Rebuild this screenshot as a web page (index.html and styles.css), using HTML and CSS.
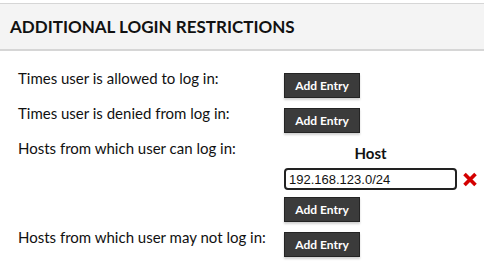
FILE: index.html
```html
<!DOCTYPE html>
<html lang="en">
<head>
    <meta charset="UTF-8"/>
    <title>Additional Login Restrictions</title>
    <link rel="stylesheet" href="styles.css">
</head>
<body>

<div class="panel">
    <div class="panel-head">
        <h2>ADDITIONAL LOGIN RESTRICTIONS</h2>
    </div>

    <div class="restrictions">
        <div class="row">
            <label>Times user is allowed to log in:</label>
            <div class="value">
                <button class="btn">Add Entry</button>
            </div>
        </div>
        <div class="row">
            <label>Times user is denied from log in:</label>
            <div class="value">
                <button class="btn">Add Entry</button>
            </div>
        </div>
        <div class="row hosts">
            <label>Hosts from which user can log in:</label>
            <div class="value">
                <div class="col-head">Host</div>
                <div class="entry">
                    <input type="text" name="allow_host" value="192.168.123.0/24"/>
                    <svg class="remove" width="16" height="15" viewBox="0 0 16 15">
                        <path d="M2.5 2 L13.5 13 M13.5 2 L2.5 13" stroke="#d40000" stroke-width="3.6" stroke-linecap="butt"/>
                    </svg>
                </div>
                <button class="btn">Add Entry</button>
            </div>
        </div>
        <div class="row">
            <label>Hosts from which user may not log in:</label>
            <div class="value">
                <button class="btn">Add Entry</button>
            </div>
        </div>
    </div>
</div>

</body>
</html>
```

FILE: styles.css
```css
body {
  margin: 0;
  font-family: Lato, 'Noto Sans', sans-serif;
  background: #ffffff;
  color: #111111;
}

.panel {
  padding-top: 3px;
}

.panel-head {
  background: #f4f4f4;
  border-top: 1px solid #d6d6d6;
  border-bottom: 2px solid #d6d6d6;
  height: 45px;
  display: flex;
  align-items: center;
  padding: 0 10px;
}

.panel-head h2 {
  margin: 0;
  font-size: 17px;
  font-weight: 700;
  color: #111111;
}

.restrictions {
  padding: 22px 0 0 18px;
}

.row {
  display: flex;
  align-items: flex-start;
  margin-bottom: 10px;
}

.row label {
  width: 266px;
  font-size: 15px;
  line-height: 19px;
  margin-top: -4px;
}

.value {
  display: flex;
  flex-direction: column;
  align-items: flex-start;
}

.col-head {
  width: 173px;
  text-align: center;
  font-weight: 700;
  font-size: 15px;
  line-height: 20px;
  margin-bottom: 5px;
}

.entry {
  display: flex;
  align-items: center;
  gap: 5px;
  margin-bottom: 7px;
}

.entry input {
  width: 173px;
  height: 22px;
  box-sizing: border-box;
  border: 2px solid #222222;
  border-radius: 4px;
  padding: 0 3px;
  font-family: 'Liberation Sans', Arial, sans-serif;
  font-size: 13px;
  color: #111111;
  outline: none;
}

.btn {
  width: 76px;
  height: 25px;
  background: #3b3b3b;
  border: 1px solid #242424;
  box-shadow: 0 2px 2px rgba(0, 0, 0, 0.18);
  color: #ffffff;
  font-family: Lato, 'Noto Sans', sans-serif;
  font-weight: 700;
  font-size: 12px;
  padding: 0;
  cursor: pointer;
}
```
